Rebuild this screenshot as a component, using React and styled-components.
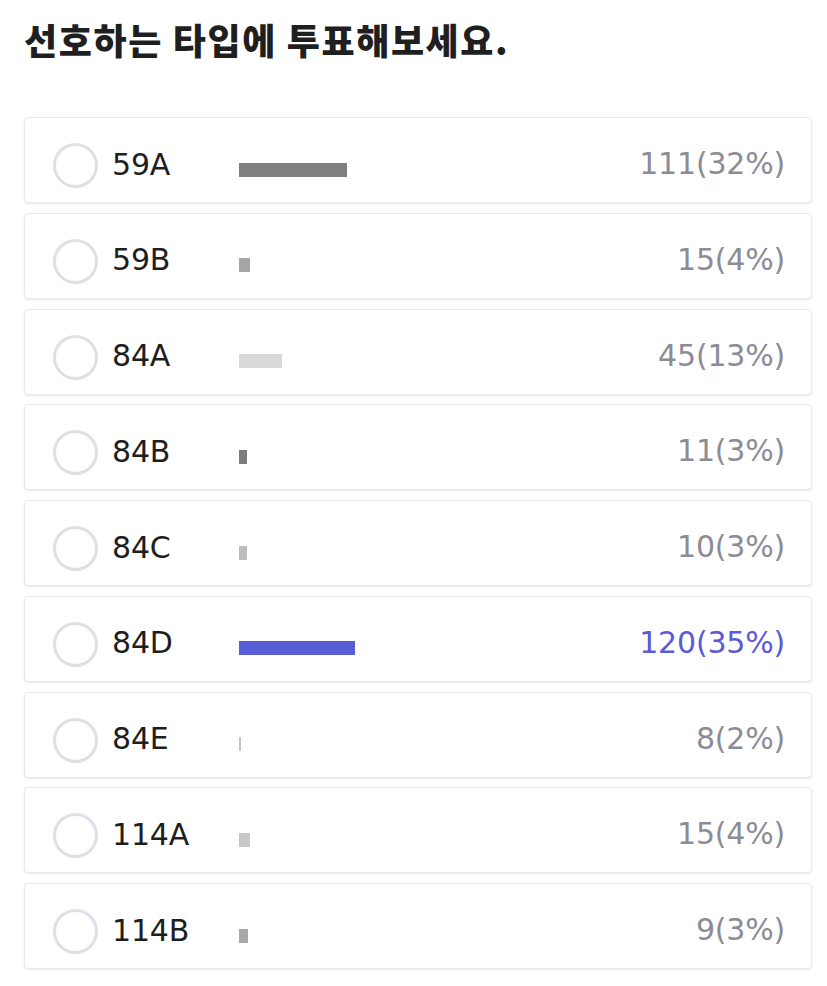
import React from 'react';
import styled, { createGlobalStyle } from 'styled-components';

const GlobalStyle = createGlobalStyle`
  body {
    margin: 0;
    background: #ffffff;
  }
`;

const Page = styled.div`
  padding: 18px 15px 16px 24px;
`;

const Title = styled.h2`
  margin: 0 0 56px;
  font-family: "Noto Sans CJK KR", "Noto Sans", sans-serif;
  font-size: 36px;
  line-height: 43px;
  font-weight: 900;
  letter-spacing: 1.6px;
  color: #1f1f1f;
`;

const List = styled.div`
  display: flex;
  flex-direction: column;
  gap: 9.75px;
`;

const Card = styled.label`
  display: flex;
  align-items: center;
  height: 86px;
  box-sizing: border-box;
  padding: 0 26px 0 28px;
  background: #ffffff;
  border: 1px solid #e9e9ec;
  border-radius: 4px;
  box-shadow: 0 1px 2px rgba(0, 0, 0, 0.09);
  cursor: pointer;
`;

const Radio = styled.span`
  flex: none;
  width: 45px;
  height: 45px;
  box-sizing: border-box;
  margin-top: 11px;
  border: 3px solid #e0dfe8;
  border-radius: 50%;
`;

const Name = styled.span`
  flex: none;
  width: 127px;
  margin: 8px 0 0 14px;
  font-family: "DejaVu Sans", sans-serif;
  font-size: 30px;
  letter-spacing: -0.2px;
  color: #1e1e1e;
`;

const Track = styled.div`
  flex: 1;
  margin-top: 19px;
  height: 14px;
`;

const Bar = styled.div`
  height: 14px;
  background: ${(p) => p.$color};
`;

const Count = styled.span`
  flex: none;
  margin-top: 7px;
  font-family: "DejaVu Sans", sans-serif;
  font-size: 30px;
  letter-spacing: -0.2px;
  color: ${(p) => (p.$top ? '#5b5bd6' : '#8c8c96')};
`;

const options = [
  { name: '59A', count: 111, pct: 32, bar: 108, color: '#7f7f7f' },
  { name: '59B', count: 15, pct: 4, bar: 11, color: '#a6a6a6' },
  { name: '84A', count: 45, pct: 13, bar: 43, color: '#d9d9d9' },
  { name: '84B', count: 11, pct: 3, bar: 8, color: '#7c7c7c' },
  { name: '84C', count: 10, pct: 3, bar: 8, color: '#bdbdbd' },
  { name: '84D', count: 120, pct: 35, bar: 116, color: '#5a5ed6', top: true },
  { name: '84E', count: 8, pct: 2, bar: 2, color: '#c4c4c4' },
  { name: '114A', count: 15, pct: 4, bar: 11, color: '#c8c8c8' },
  { name: '114B', count: 9, pct: 3, bar: 9, color: '#a9a9a9' },
];

export default function App() {
  return (
    <>
      <GlobalStyle />
      <Page>
        <Title>선호하는 타입에 투표해보세요.</Title>
        <List>
          {options.map((o) => (
            <Card key={o.name}>
              <Radio />
              <Name>{o.name}</Name>
              <Track>
                <Bar $color={o.color} style={{ width: o.bar }} />
              </Track>
              <Count $top={o.top}>
                {o.count}({o.pct}%)
              </Count>
            </Card>
          ))}
        </List>
      </Page>
    </>
  );
}
